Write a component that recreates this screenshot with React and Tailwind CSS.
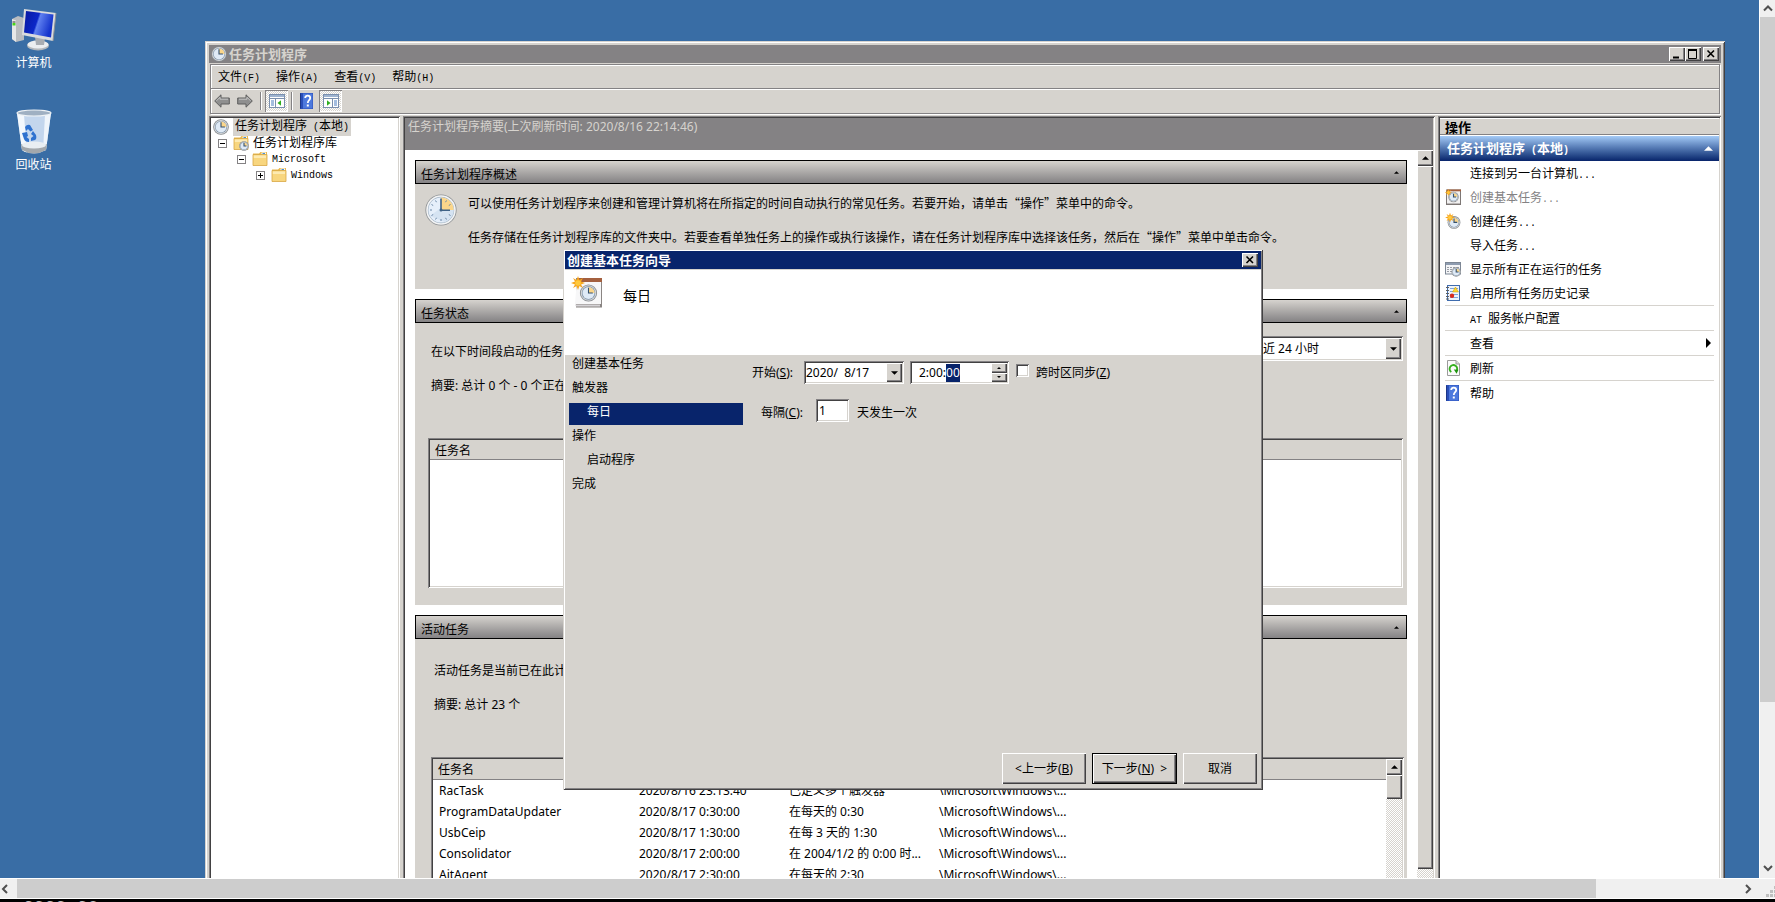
import React, { useEffect, useRef } from 'react';

const raised =
  'bg-[#d6d3ce] shadow-[inset_1px_1px_0_#ffffff,inset_-1px_-1px_0_#424142,inset_-2px_-2px_0_#848284]';
const sunken =
  'bg-white p-0.5 shadow-[inset_1px_1px_0_#848284,inset_-1px_-1px_0_#ffffff,inset_2px_2px_0_#424142,inset_-2px_-2px_0_#d6d3ce]';
const windowFrame =
  'bg-[#d6d3ce] shadow-[inset_1px_1px_0_#d6d3ce,inset_-1px_-1px_0_#424142,inset_2px_2px_0_#ffffff,inset_-2px_-2px_0_#848284]';
const dither = 'bg-[repeating-conic-gradient(#ffffff_0_25%,#d6d3ce_0_50%)] bg-[length:2px_2px]';

/* ---------- icons ---------- */

const ClockFace = ({ cx, cy, r }) => (
  <g>
    <circle cx={cx} cy={cy} r={r} fill="#85898d" />
    <circle cx={cx} cy={cy} r={r * 0.9} fill="#d4d7da" />
    <circle cx={cx} cy={cy} r={r * 0.78} fill="#7f93a8" />
    <circle cx={cx} cy={cy} r={r * 0.7} fill="#dfeaf6" />
    <path d={`M${cx} ${cy} V${cy - r * 0.7} A${r * 0.7} ${r * 0.7} 0 0 1 ${cx + r * 0.7} ${cy} Z`} fill="#fbd68a" />
    <path
      d={`M${cx} ${cy - r * 0.62} V${cy} H${cx + r * 0.5}`}
      fill="none"
      stroke="#34516f"
      strokeWidth={Math.max(1.1, r * 0.12)}
    />
  </g>
);

const ClockIcon = ({ className }) => (
  <svg viewBox="0 0 16 16" className={className}>
    <ClockFace cx={8} cy={8} r={7.8} />
  </svg>
);

const BigClockIcon = () => (
  <svg viewBox="0 0 32 32" className="w-8 h-8 shrink-0">
    <circle cx="16" cy="16" r="15.6" fill="#8d9093" />
    <circle cx="16" cy="16" r="14.8" fill="#f3f4f5" />
    <circle cx="16" cy="16" r="13.2" fill="#9fb0c1" />
    <circle cx="16" cy="16" r="12.6" fill="#e6effa" />
    <path d="M5 22 L25 7 A12.6 12.6 0 0 1 20 28 Z" fill="#c9daec" opacity="0.6" />
    <path d="M16 16 V3.4 A12.6 12.6 0 0 1 28.6 16 Z" fill="#fbd68a" />
    <g stroke="#6b87a6" strokeWidth="1">
      <path d="M16 27v-2M5 16h2M10.5 6.5l1 1.7M6.5 10.5l1.7 1M6.5 21.5l1.7-1M10.5 25.5l1-1.7M21.5 25.5l-1-1.7M25.5 21.5l-1.7-1M21.5 6.5l-1 1.7M25.5 10.5l-1.7 1" />
    </g>
    <path d="M16 4.5V16.2H25" fill="none" stroke="#3f6287" strokeWidth="1.6" />
    <circle cx="16" cy="16" r="1.5" fill="#3f6287" />
  </svg>
);

const FolderShape = () => (
  <g>
    <path d="M1 2.5 H7 L8.5 1 H15 V4 H1 Z" fill="#e9b84f" />
    <rect x="9.5" y="1.5" width="4.5" height="2" fill="#ffffff" />
    <rect x="10.5" y="2" width="2.5" height="1" fill="#4b8fd0" />
    <path d="M1 3.5 H15 V14.5 H1 Z" fill="#f8d67f" stroke="#d8a744" strokeWidth="0.8" />
    <path d="M1.8 4.5 H14 V7 H1.8 Z" fill="#fdeab2" />
  </g>
);

const FolderIcon = ({ className }) => (
  <svg viewBox="0 0 16 16" className={className}>
    <FolderShape />
  </svg>
);

const FolderClockIcon = ({ className }) => (
  <svg viewBox="0 0 16 16" className={className}>
    <FolderShape />
    <ClockFace cx={11} cy={11} r={4.8} />
  </svg>
);

const HelpIcon = ({ className }) => (
  <svg viewBox="0 0 16 16" className={className}>
    <rect x="1" y="0" width="13" height="16" fill="#2a4fb8" />
    <rect x="4" y="0.5" width="9.5" height="15" fill="#4d79dd" />
    <path d="M1.5 0.5 V15.5" stroke="#1c3687" />
    <path d="M6.2 5 C6.2 1.8 11.2 1.8 11.2 5 C11.2 7.2 8.8 7.2 8.8 10" fill="none" stroke="#fff" strokeWidth="1.8" />
    <rect x="7.8" y="11.5" width="2" height="2" fill="#fff" />
  </svg>
);

const ArrowIcon = ({ flip }) => (
  <svg viewBox="0 0 16 14" className={flip ? 'w-4 h-3.5 -scale-x-100' : 'w-4 h-3.5'}>
    <path d="M0.7 7 L7 0.8 V4 H15.3 V10 H7 V13.2 Z" fill="#8f8f8f" stroke="#5e5e5e" />
    <path d="M2.5 6.8 L6 3.2 V5.2 H14" fill="none" stroke="#c4c4c4" />
  </svg>
);

const PaneIcon = ({ right }) => (
  <svg viewBox="0 0 16 14" className="w-4 h-3.5">
    <rect x="0.5" y="0.5" width="15" height="13" fill="#ffffff" stroke="#7a8fae" />
    <rect x="1" y="1" width="14" height="2" fill="#9fb4d0" />
    <path d="M1 4.5 H15" stroke="#7a8fae" />
    {right ? (
      <g>
        <path d="M9.5 5 V13" stroke="#7a8fae" />
        <path d="M11 7h3M11 9h3M11 11h3" stroke="#4a7cc0" />
        <path d="M4 6.2 L7.5 9 L4 11.8 Z" fill="#2fae1f" />
      </g>
    ) : (
      <g>
        <path d="M6.5 5 V13" stroke="#7a8fae" />
        <path d="M2 7h3M2 9h3M2 11h3" stroke="#4a7cc0" />
        <path d="M12 6.2 L8.5 9 L12 11.8 Z" fill="#2fae1f" />
      </g>
    )}
  </svg>
);

const Star = ({ x, y, s }) => (
  <g transform={`translate(${x} ${y}) scale(${s})`}>
    <path
      d="M0 -7 L1.4 -3 L5 -5 L3 -1.4 L7 0 L3 1.4 L5 5 L1.4 3 L0 7 L-1.4 3 L-5 5 L-3 1.4 L-7 0 L-3 -1.4 L-5 -5 L-1.4 -3 Z"
      fill="#f7a51c"
    />
    <circle r="2.8" fill="#ffc93d" />
  </g>
);

const BasicTaskIcon = ({ className }) => (
  <svg viewBox="0 0 32 32" className={className}>
    <rect x="5" y="2" width="26" height="29.5" fill="#8a8583" />
    <path d="M6 2 H30 V28 H4 Z" fill="#f7f7f8" />
    <rect x="6" y="2" width="25" height="4" fill="#a4603f" />
    <path d="M4 28.5 H29 V30.5 H5 Z" fill="#d5d3d6" />
    <ClockFace cx={17.5} cy={17} r={8.6} />
    <Star x={7} y={7} s={1} />
  </svg>
);

const BasicTaskSmallIcon = ({ className }) => (
  <svg viewBox="0 0 16 16" className={className}>
    <rect x="1.5" y="1" width="14" height="14.5" fill="#f2f1f1" stroke="#7d7775" />
    <rect x="2" y="0.5" width="14" height="1.8" fill="#a4603f" />
    <path d="M2 14.5 H15" stroke="#bdb9b8" />
    <ClockFace cx={8.5} cy={8} r={5.2} />
    <Star x={3.4} y={3.6} s={0.5} />
  </svg>
);

const NewTaskIcon = ({ className }) => (
  <svg viewBox="0 0 16 16" className={className}>
    <ClockFace cx={9} cy={9.4} r={6.4} />
    <Star x={5} y={4.6} s={0.7} />
  </svg>
);

const RunningIcon = ({ className }) => (
  <svg viewBox="0 0 16 16" className={className}>
    <rect x="0.5" y="1.5" width="15" height="11.5" fill="#f4f5f7" stroke="#7d8795" />
    <rect x="1" y="2" width="14" height="2" fill="#8e9cb0" />
    <path d="M2 6.5h2M5 6.5h2M8 6.5h2M11 6.5h3M2 8.5h2M5 8.5h2M2 10.5h2M5 10.5h2" stroke="#9a9ea6" />
    <ClockFace cx={11.2} cy={11} r={4.7} />
  </svg>
);

const HistoryIcon = ({ className }) => (
  <svg viewBox="0 0 16 16" className={className}>
    <rect x="2.5" y="0.5" width="12" height="15" fill="#eef4fc" stroke="#3f6cae" />
    <path d="M5 3.5h8M5 6.5h8M5 9.5h8M5 12.5h8" stroke="#7da7dc" />
    <path d="M1 2.5h3M1 5.5h3M1 8.5h3M1 11.5h3M1 14h3" stroke="#5d5d5d" />
    <path d="M10.5 2 L13.5 7 H7.5 Z" fill="#ffd52e" stroke="#c79a00" strokeWidth="0.5" />
    <circle cx="7" cy="10.7" r="2.2" fill="#d92a1c" />
  </svg>
);

const RefreshIcon = ({ className }) => (
  <svg viewBox="0 0 16 16" className={className}>
    <path d="M2.5 0.5 H11 L14.5 4 V15.5 H2.5 Z" fill="#fbfbfb" stroke="#9b9b9b" />
    <path d="M11 0.5 V4 H14.5" fill="#dddddd" stroke="#9b9b9b" />
    <path d="M6.3 12 A3.8 3.8 0 1 1 11.5 11" fill="none" stroke="#35b01f" strokeWidth="1.9" />
    <path d="M8.8 9.6 L13.4 9.8 L11.6 13.8 Z" fill="#1f9410" />
  </svg>
);

const ComputerIcon = () => (
  <svg viewBox="0 0 48 44" className="w-12 h-11">
    <defs>
      <linearGradient id="screen" x1="0" y1="0" x2="1" y2="0.3">
        <stop offset="0" stopColor="#0818a0" />
        <stop offset="0.5" stopColor="#0c27c8" />
        <stop offset="0.56" stopColor="#5f80f0" />
        <stop offset="1" stopColor="#1534cc" />
      </linearGradient>
    </defs>
    <path d="M2 11 L8 8 L14 10 V32 L6 34 L2 31 Z" fill="#b9bcc0" />
    <path d="M2 11 L6 12.5 V34 L2 31 Z" fill="#e6e7e8" />
    <path d="M2.5 14h3" stroke="#3a3a3a" />
    <rect x="2.5" y="15" width="3" height="2.5" fill="#47d41d" />
    <ellipse cx="28" cy="37.5" rx="11" ry="5" fill="#b4b8bc" />
    <ellipse cx="28" cy="36.5" rx="10.5" ry="4" fill="#eceef0" />
    <path d="M25 29 L35 30 L34 37 H26 Z" fill="#a9adb2" />
    <path d="M14 1 L46 5 L43 33 L12 27 Z" fill="#d9dbdd" />
    <path d="M16 3 L43.5 6.5 L41 29.5 L14 24.5 Z" fill="url(#screen)" />
    <path d="M46 5 L43 33" stroke="#8b8f94" />
  </svg>
);

const RecycleBinIcon = () => (
  <svg viewBox="0 0 36 46" className="w-9 h-[46px]">
    <path d="M1 4 L6 41 Q18 48 30 41 L35 4 Z" fill="#cfe0f3" opacity="0.92" />
    <path d="M1 4 L6 41 Q8 43 11 43.6 L8 6 Z" fill="#f3f8fd" />
    <path d="M29 6 L27 42 L30 41 L35 4 Z" fill="#eff5fb" />
    <path d="M5 35 Q18 42 31 35 L30 41 Q18 48 6 41 Z" fill="#a3a8ac" />
    <ellipse cx="18" cy="36" rx="12" ry="3.6" fill="#e9eef2" />
    <ellipse cx="18" cy="4" rx="17" ry="3" fill="#9fb0c2" stroke="#eef2f5" strokeWidth="1.2" />
    <g fill="#2f72cf">
      <path d="M9 18 Q11 15 14 16 L17 21 L14.5 22.5 L12 20 L10 22 Z" />
      <path d="M17 22 L20 26 Q21 30 19 31 L15 32 V29 L17.5 27 L15 25 Z" />
      <path d="M6 24 L11 23 L12 27 L10.5 28 L13 30 V33 Q9 33 8 30 Z" />
    </g>
  </svg>
);

const Triangle = ({ dir, className }) => {
  const paths = { up: 'M0 4 L4 0 L8 4 Z', down: 'M0 0 L8 0 L4 4 Z', right: 'M0 0 L5 5 L0 10 Z' };
  return (
    <svg viewBox={dir === 'right' ? '0 0 5 10' : '0 0 8 4'} className={className}>
      <path d={paths[dir]} fill="currentColor" />
    </svg>
  );
};

const Chevron = ({ className }) => (
  <svg viewBox="0 0 10 6" className={className}>
    <path d="M1 5 L5 1 L9 5" fill="none" stroke="#4f4f4f" strokeWidth="2" />
  </svg>
);

/* ---------- small parts ---------- */

// Latin text in system menus takes exactly half of an ideograph
const Half = ({ children }) => <span className="font-['Liberation_Mono'] text-[10px]">{children}</span>;

const TitleButton = ({ label, children }) => (
  <button type="button" aria-label={label} className={`w-4 h-3.5 flex items-center justify-center ${raised}`}>
    <svg viewBox="0 0 16 14" className="w-4 h-3.5" fill="none" stroke="#000">
      {children}
    </svg>
  </button>
);

const CloseButton = () => (
  <TitleButton label="关闭">
    <path d="M4.5 3.5 L11 10 M11 3.5 L4.5 10" strokeWidth="1.6" />
  </TitleButton>
);

const ScrollUp = () => (
  <button type="button" aria-label="向上滚动" className={`w-4 h-4 shrink-0 flex items-center justify-center ${raised}`}>
    <Triangle dir="up" className="w-[7px] h-1" />
  </button>
);

const Section = ({ title, bodyClass, children }) => (
  <section className="shrink-0">
    <button
      type="button"
      className="w-full h-6 px-[5px] flex items-center justify-between border border-black bg-linear-to-b from-[#d6d3ce] to-[#848284]"
    >
      <span className="pt-1.5">{title}</span>
      <Triangle dir="up" className="w-[5px] h-[3px] mr-0.5" />
    </button>
    <div className={`bg-[#d6d3ce] ${bodyClass}`}>{children}</div>
  </section>
);

/* ---------- data ---------- */

const menus = [['文件', 'F'], ['操作', 'A'], ['查看', 'V'], ['帮助', 'H']];

const activeTasks = [
  ['RacTask', '2020/8/16 23:13:40', '已定义多个触发器'],
  ['ProgramDataUpdater', '2020/8/17 0:30:00', '在每天的 0:30'],
  ['UsbCeip', '2020/8/17 1:30:00', '在每 3 天的 1:30'],
  ['Consolidator', '2020/8/17 2:00:00', '在 2004/1/2 的 0:00 时...'],
  ['AitAgent', '2020/8/17 2:30:00', '在每天的 2:30'],
];

const actions = [
  { name: '连接到另一台计算机', dots: true },
  { name: '创建基本任务', dots: true, icon: BasicTaskSmallIcon, disabled: true },
  { name: '创建任务', dots: true, icon: NewTaskIcon },
  { name: '导入任务', dots: true },
  { name: '显示所有正在运行的任务', icon: RunningIcon },
  { name: '启用所有任务历史记录', icon: HistoryIcon },
  { prefix: 'AT ', name: '服务帐户配置', line: true },
  { name: '查看', line: true, submenu: true },
  { name: '刷新', line: true, icon: RefreshIcon },
  { name: '帮助', line: true, icon: HelpIcon },
];

const steps = [
  { name: '创建基本任务' },
  { name: '触发器' },
  { name: '每日', child: true, active: true },
  { name: '操作' },
  { name: '启动程序', child: true },
  { name: '完成' },
];

/* ---------- window parts ---------- */

const Toolbar = () => (
  <div className="mt-px mx-px border border-[#848284] shadow-[1px_1px_0_#ffffff]">
    <div className="h-6 pl-[7px] flex items-center gap-4 border-b border-[#848284] shadow-[inset_1px_1px_0_#ffffff]">
      {menus.map(([name, key]) => (
        <button key={key} type="button">
          {name}
          <Half>({key})</Half>
        </button>
      ))}
    </div>
    <div className="h-6 pl-[3px] flex items-center shadow-[inset_1px_1px_0_#ffffff]">
      <button type="button" aria-label="后退"><ArrowIcon /></button>
      <button type="button" aria-label="前进" className="ml-[7px]"><ArrowIcon flip /></button>
      <span className="ml-[7px] w-0.5 h-[18px] border-l border-[#848284] bg-white" />
      <button type="button" aria-label="显示控制台树" className={`ml-[3px] w-[23px] h-[22px] flex items-center justify-center ${dither} shadow-[inset_1px_1px_0_#848284,inset_-1px_-1px_0_#ffffff]`}>
        <PaneIcon />
      </button>
      <span className="ml-[3px] w-0.5 h-[18px] border-l border-[#848284] bg-white" />
      <button type="button" aria-label="帮助" className="ml-1.5"><HelpIcon className="w-4 h-4" /></button>
      <button type="button" aria-label="显示操作窗格" className={`ml-1 w-[23px] h-[22px] flex items-center justify-center ${dither} shadow-[inset_1px_1px_0_#848284,inset_-1px_-1px_0_#ffffff]`}>
        <PaneIcon right />
      </button>
    </div>
  </div>
);

const Expander = ({ open }) => (
  <svg viewBox="0 0 9 9" className="w-[9px] h-[9px] mr-1.5">
    <rect x="0.5" y="0.5" width="8" height="8" fill="#fff" stroke="#848284" />
    <path d={open ? 'M2 4.5h5' : 'M2 4.5h5M4.5 2v5'} stroke="#000" />
  </svg>
);

const Tree = () => (
  <nav className={`w-[191px] shrink-0 ${sunken}`}>
    <ul className="pt-px">
      <li className="h-4 pl-0.5 flex items-center">
        <ClockIcon className="w-4 h-4" />
        <span className="ml-1 px-0.5 leading-4 bg-[#d6d3ce]">任务计划程序<Half> (</Half>本地<Half>)</Half></span>
      </li>
      <li className="h-4 pl-[7px] flex items-center">
        <Expander open />
        <FolderClockIcon className="w-4 h-4" />
        <span className="ml-1">任务计划程序库</span>
      </li>
      <li className="h-4 pl-[26px] flex items-center">
        <Expander open />
        <FolderIcon className="w-4 h-4" />
        <span className="ml-1 leading-4"><Half>Microsoft</Half></span>
      </li>
      <li className="h-4 pl-[45px] flex items-center">
        <Expander />
        <FolderIcon className="w-4 h-4" />
        <span className="ml-1 leading-4"><Half>Windows</Half></span>
      </li>
    </ul>
  </nav>
);

const Summary = () => (
  <main className={`flex-1 min-w-0 flex flex-col ${sunken}`}>
    <h2 className="h-8 shrink-0 pl-[3px] bg-[#848284] text-[#d6d3ce] leading-[18px]">
      任务计划程序摘要(上次刷新时间: 2020/8/16 22:14:46)
    </h2>
    <div className="flex-1 min-h-0 flex">
      <div className="flex-1 min-w-0 p-2.5 pb-0 flex flex-col gap-2.5 overflow-hidden">
        <Section title="任务计划程序概述" bodyClass="pt-2.5 pl-2.5 pb-[43px] flex gap-[11px]">
          <BigClockIcon />
          <div className="flex flex-col gap-4 leading-[18px] whitespace-nowrap font-['Noto_Sans_CJK_SC',sans-serif]">
            <p>可以使用任务计划程序来创建和管理计算机将在所指定的时间自动执行的常见任务。若要开始，请单击“操作”菜单中的命令。</p>
            <p>任务存储在任务计划程序库的文件夹中。若要查看单独任务上的操作或执行该操作，请在任务计划程序库中选择该任务，然后在“操作”菜单中单击命令。</p>
          </div>
        </Section>

        <Section title="任务状态" bodyClass="pt-[13px] pl-[13px] pr-1 pb-[17px] leading-[18px]">
          <div className="flex items-end justify-between pl-[3px]">
            <label htmlFor="period">在以下时间段启动的任务</label>
            <div className={`w-[158px] h-[25px] flex relative ${sunken}`}>
              <select id="period" className="flex-1 appearance-none pl-1 outline-none">
                <option>最近 24 小时</option>
              </select>
              <span className={`absolute right-0.5 inset-y-0.5 w-4 flex items-center justify-center pointer-events-none ${raised}`}>
                <Triangle dir="down" className="w-[7px] h-1" />
              </span>
            </div>
          </div>
          <p className="mt-4 pl-[3px]">摘要: 总计 0 个 - 0 个正在</p>
          <div className={`mt-[43px] h-[150px] ${sunken}`}>
            <table className="w-full bg-[#d6d3ce] border-b border-[#848284]">
              <thead>
                <tr className="h-[19px]">
                  <th className="pl-[5px] pt-0.5 text-left font-normal leading-[17px]">任务名</th>
                </tr>
              </thead>
            </table>
          </div>
        </Section>

        <Section title="活动任务" bodyClass="pt-[23px] pl-4 pr-[3px] leading-[18px]">
          <p className="pl-[3px]">活动任务是当前已在此计</p>
          <p className="mt-4 pl-[3px]">摘要: 总计 23 个</p>
          <div className={`mt-[43px] flex ${sunken}`}>
            <table className="flex-1 w-full table-fixed border-collapse self-start">
              <colgroup>
                <col className="w-[200px]" />
                <col className="w-[150px]" />
                <col className="w-[150px]" />
                <col />
              </colgroup>
              <thead>
                <tr className="h-5 bg-[#d6d3ce] border-b border-[#848284]">
                  <th colSpan={4} className="pl-[5px] pt-0.5 text-left font-normal leading-[17px]">任务名</th>
                </tr>
              </thead>
              <tbody>
                {activeTasks.map((task) => (
                  <tr key={task[0]} className="h-[21px] whitespace-nowrap leading-[18px]">
                    {task.map((cell) => (
                      <td key={cell} className="pl-1.5 pt-0.5 pb-px">{cell}</td>
                    ))}
                    <td className="pl-1.5 pt-0.5 pb-px">{'\\Microsoft\\Windows\\...'}</td>
                  </tr>
                ))}
              </tbody>
            </table>
            <div className={`w-4 shrink-0 ${dither}`}>
              <ScrollUp />
              <div className={`h-6 ${raised}`} />
            </div>
          </div>
        </Section>
      </div>
      <div className={`w-4 shrink-0 flex flex-col ${dither}`}>
        <ScrollUp />
        <div className={`flex-1 mb-[13px] ${raised}`} />
      </div>
    </div>
  </main>
);

const Actions = () => (
  <aside className={`w-[283px] shrink-0 ${sunken}`}>
    <h2 className="h-[17px] pl-[5px] bg-[#d6d3ce] border-b border-[#848284] shadow-[inset_0_1px_0_#ffffff] text-[13px] leading-[18px] font-bold">
      操作
    </h2>
    <button
      type="button"
      className="mt-px w-full h-[25px] pl-[7px] pr-1.5 flex items-center justify-between bg-linear-to-b from-[#a5cbf7] to-[#08246b] text-white text-[13px] font-bold"
    >
      <span>任务计划程序<Half> (</Half>本地<Half>)</Half></span>
      <Triangle dir="up" className="w-[9px] h-[5px]" />
    </button>
    <ul className="px-[5px]">
      {actions.map((item) => {
        const Icon = item.icon;
        return (
          <li key={item.name} className={item.line ? 'border-t border-[#d6d3ce]' : ''}>
            <button
              type="button"
              disabled={item.disabled}
              className={`w-full h-6 flex items-center ${item.disabled ? 'text-[#848284]' : ''}`}
            >
              <span className="w-[25px]">{Icon && <Icon className="w-4 h-4" />}</span>
              <span className="pt-0.5">
                {item.prefix && <Half>{item.prefix}</Half>}
                {item.name}
                {item.dots && <Half>...</Half>}
              </span>
              {item.submenu && <Triangle dir="right" className="w-[5px] h-2.5 ml-auto mr-[3px]" />}
            </button>
          </li>
        );
      })}
    </ul>
  </aside>
);

const Wizard = () => {
  const timeRef = useRef(null);

  // the seconds part of the start time is being edited
  useEffect(() => {
    timeRef.current.focus({ preventScroll: true });
    timeRef.current.setSelectionRange(5, 7);
  }, []);

  return (
    <div role="dialog" aria-labelledby="wizard-title" className={`absolute left-[563px] top-[249px] w-[700px] h-[541px] p-0.5 flex flex-col ${windowFrame}`}>
      <div className="h-[18px] shrink-0 pl-0.5 pr-[3px] flex items-center justify-between bg-[#08246b]">
        <h2 id="wizard-title" className="text-[13px] leading-[18px] font-bold text-white">创建基本任务向导</h2>
        <CloseButton />
      </div>
      <div className="mt-px h-[85px] shrink-0 pl-1.5 pt-1.5 flex bg-white">
        <BasicTaskIcon className="w-8 h-8" />
        <h3 className="ml-5 mt-2.5 text-[14px] leading-5">每日</h3>
      </div>
      <div className="flex-1 flex">
        <ol className="w-[178px] pl-1 flex flex-col gap-0.5">
          {steps.map((step) => (
            <li
              key={step.name}
              className={`h-[22px] leading-[18px] ${step.child ? 'pl-[18px]' : 'pl-[3px]'} ${step.active ? 'bg-[#08246b] text-white' : ''}`}
            >
              {step.name}
            </li>
          ))}
        </ol>
        <div className="pl-[9px] pt-1.5 leading-[18px]">
          <div className="flex items-center h-[23px]">
            <label htmlFor="start" className="w-[52px]">开始(<u>S</u>):</label>
            <div className={`w-[100px] h-[23px] flex ${sunken}`}>
              <input id="start" defaultValue="2020/  8/17" className="flex-1 min-w-0 outline-none" />
              <button type="button" aria-label="选择日期" className={`w-4 flex items-center justify-center ${raised}`}>
                <Triangle dir="down" className="w-[7px] h-1" />
              </button>
            </div>
            <div className={`ml-1.5 w-[99px] h-[23px] flex ${sunken}`}>
              <input
                ref={timeRef}
                aria-label="时间"
                defaultValue="2:00:00"
                className="flex-1 min-w-0 pl-[7px] outline-none caret-transparent selection:bg-[#08246b] selection:text-white"
              />
              <span className="w-4 flex flex-col">
                <button type="button" aria-label="增加" className={`flex-1 flex items-center justify-center ${raised}`}>
                  <Triangle dir="up" className="w-1 h-0.5" />
                </button>
                <button type="button" aria-label="减少" className={`flex-1 flex items-center justify-center ${raised}`}>
                  <Triangle dir="down" className="w-1 h-0.5" />
                </button>
              </span>
            </div>
            <input id="sync" type="checkbox" className={`ml-[7px] mb-1 w-[13px] h-[13px] appearance-none ${sunken}`} />
            <label htmlFor="sync" className="ml-[7px]">跨时区同步(<u>Z</u>)</label>
          </div>
          <div className="mt-[15px] pl-[9px] flex items-center h-[23px]">
            <label htmlFor="every" className="w-[55px] pt-1">每隔(<u>C</u>):</label>
            <div className={`w-[33px] h-[23px] flex ${sunken}`}>
              <input id="every" defaultValue="1" className="flex-1 min-w-0 pl-px outline-none" />
            </div>
            <span className="ml-2 pt-1">天发生一次</span>
          </div>
        </div>
      </div>
      <div className="p-1 flex justify-end gap-1.5">
        <button type="button" className={`w-[84px] h-[31px] ${raised}`}>&lt;上一步(<u>B</u>)</button>
        <button type="button" className={`w-[85px] h-[31px] border border-black ${raised}`}>下一步(<u>N</u>)&nbsp; &gt;</button>
        <button type="button" className={`w-[74px] h-[31px] ${raised}`}>取消</button>
      </div>
    </div>
  );
};

const DesktopIcon = ({ name, children }) => (
  <button type="button" className="w-[67px] flex flex-col items-center gap-0.5 text-white leading-4">
    <span className="h-[46px] flex items-center">{children}</span>
    {name}
  </button>
);

export default function App() {
  return (
    <div className="h-screen flex flex-col overflow-hidden bg-black text-black text-[12px] font-['Noto_Sans','Noto_Sans_CJK_SC',sans-serif]">
      <div className="flex-1 min-h-0 flex">
        <div className="relative flex-1 overflow-hidden bg-[#396da5]">
          <div className="pt-[7px] flex flex-col gap-[38px] items-start">
            <DesktopIcon name="计算机"><ComputerIcon /></DesktopIcon>
            <DesktopIcon name="回收站"><RecycleBinIcon /></DesktopIcon>
          </div>

          <div className={`absolute left-[205px] right-[34px] top-[41px] -bottom-1 p-1 flex flex-col ${windowFrame}`}>
            <div className="h-[18px] shrink-0 pl-0.5 pr-0.5 flex items-center bg-[#848284]">
              <ClockIcon className="w-4 h-4" />
              <h1 className="ml-0.5 text-[13px] leading-[18px] font-bold text-[#d6d3ce]">任务计划程序</h1>
              <div className="ml-auto flex">
                <TitleButton label="最小化"><path d="M4 10.5 H10" strokeWidth="2" /></TitleButton>
                <TitleButton label="最大化"><path d="M3.5 3 V11.5 H11.5 V3 M3 3 H12" /><path d="M3 3 H12" strokeWidth="2" /></TitleButton>
                <span className="w-0.5" />
                <CloseButton />
              </div>
            </div>
            <Toolbar />
            <div className="mt-0.5 -mb-1.5 flex-1 min-h-0 flex gap-[3px]">
              <Tree />
              <Summary />
              <Actions />
            </div>
          </div>

          <Wizard />
        </div>

        <div className="w-4 shrink-0 border-l border-white bg-[#f0f0f0] flex flex-col items-center">
          <Chevron className="h-[17px] w-2.5 shrink-0" />
          <div className="w-full flex-[685] bg-[#cdcdcd]" />
          <div className="flex-[156]" />
          <Chevron className="h-5 w-2.5 shrink-0 rotate-180" />
        </div>
      </div>

      <div className="h-[21px] shrink-0 border-y border-white bg-[#f0f0f0] flex items-center">
        <Chevron className="w-[10px] h-2 shrink-0 mr-[7px] -rotate-90" />
        <div className="h-full flex-[1580] bg-[#cdcdcd]" />
        <div className="flex-[143]" />
        <Chevron className="w-[10px] h-2 mx-1 shrink-0 rotate-90" />
        <svg viewBox="0 0 18 19" className="w-[18px] h-[19px]" fill="#bfbfbf">
          <path d="M9 15h3v3h-3zM13 15h3v3h-3zM17 15h1v3h-1zM13 11h3v3h-3zM17 11h1v3h-1zM17 7h1v3h-1z" />
        </svg>
      </div>
      <div className="h-[3px] shrink-0 overflow-hidden pl-[23px] text-[#c0c0c0] text-[18px] leading-[18px] font-['Liberation_Mono']">
        2020-08
      </div>
    </div>
  );
}
